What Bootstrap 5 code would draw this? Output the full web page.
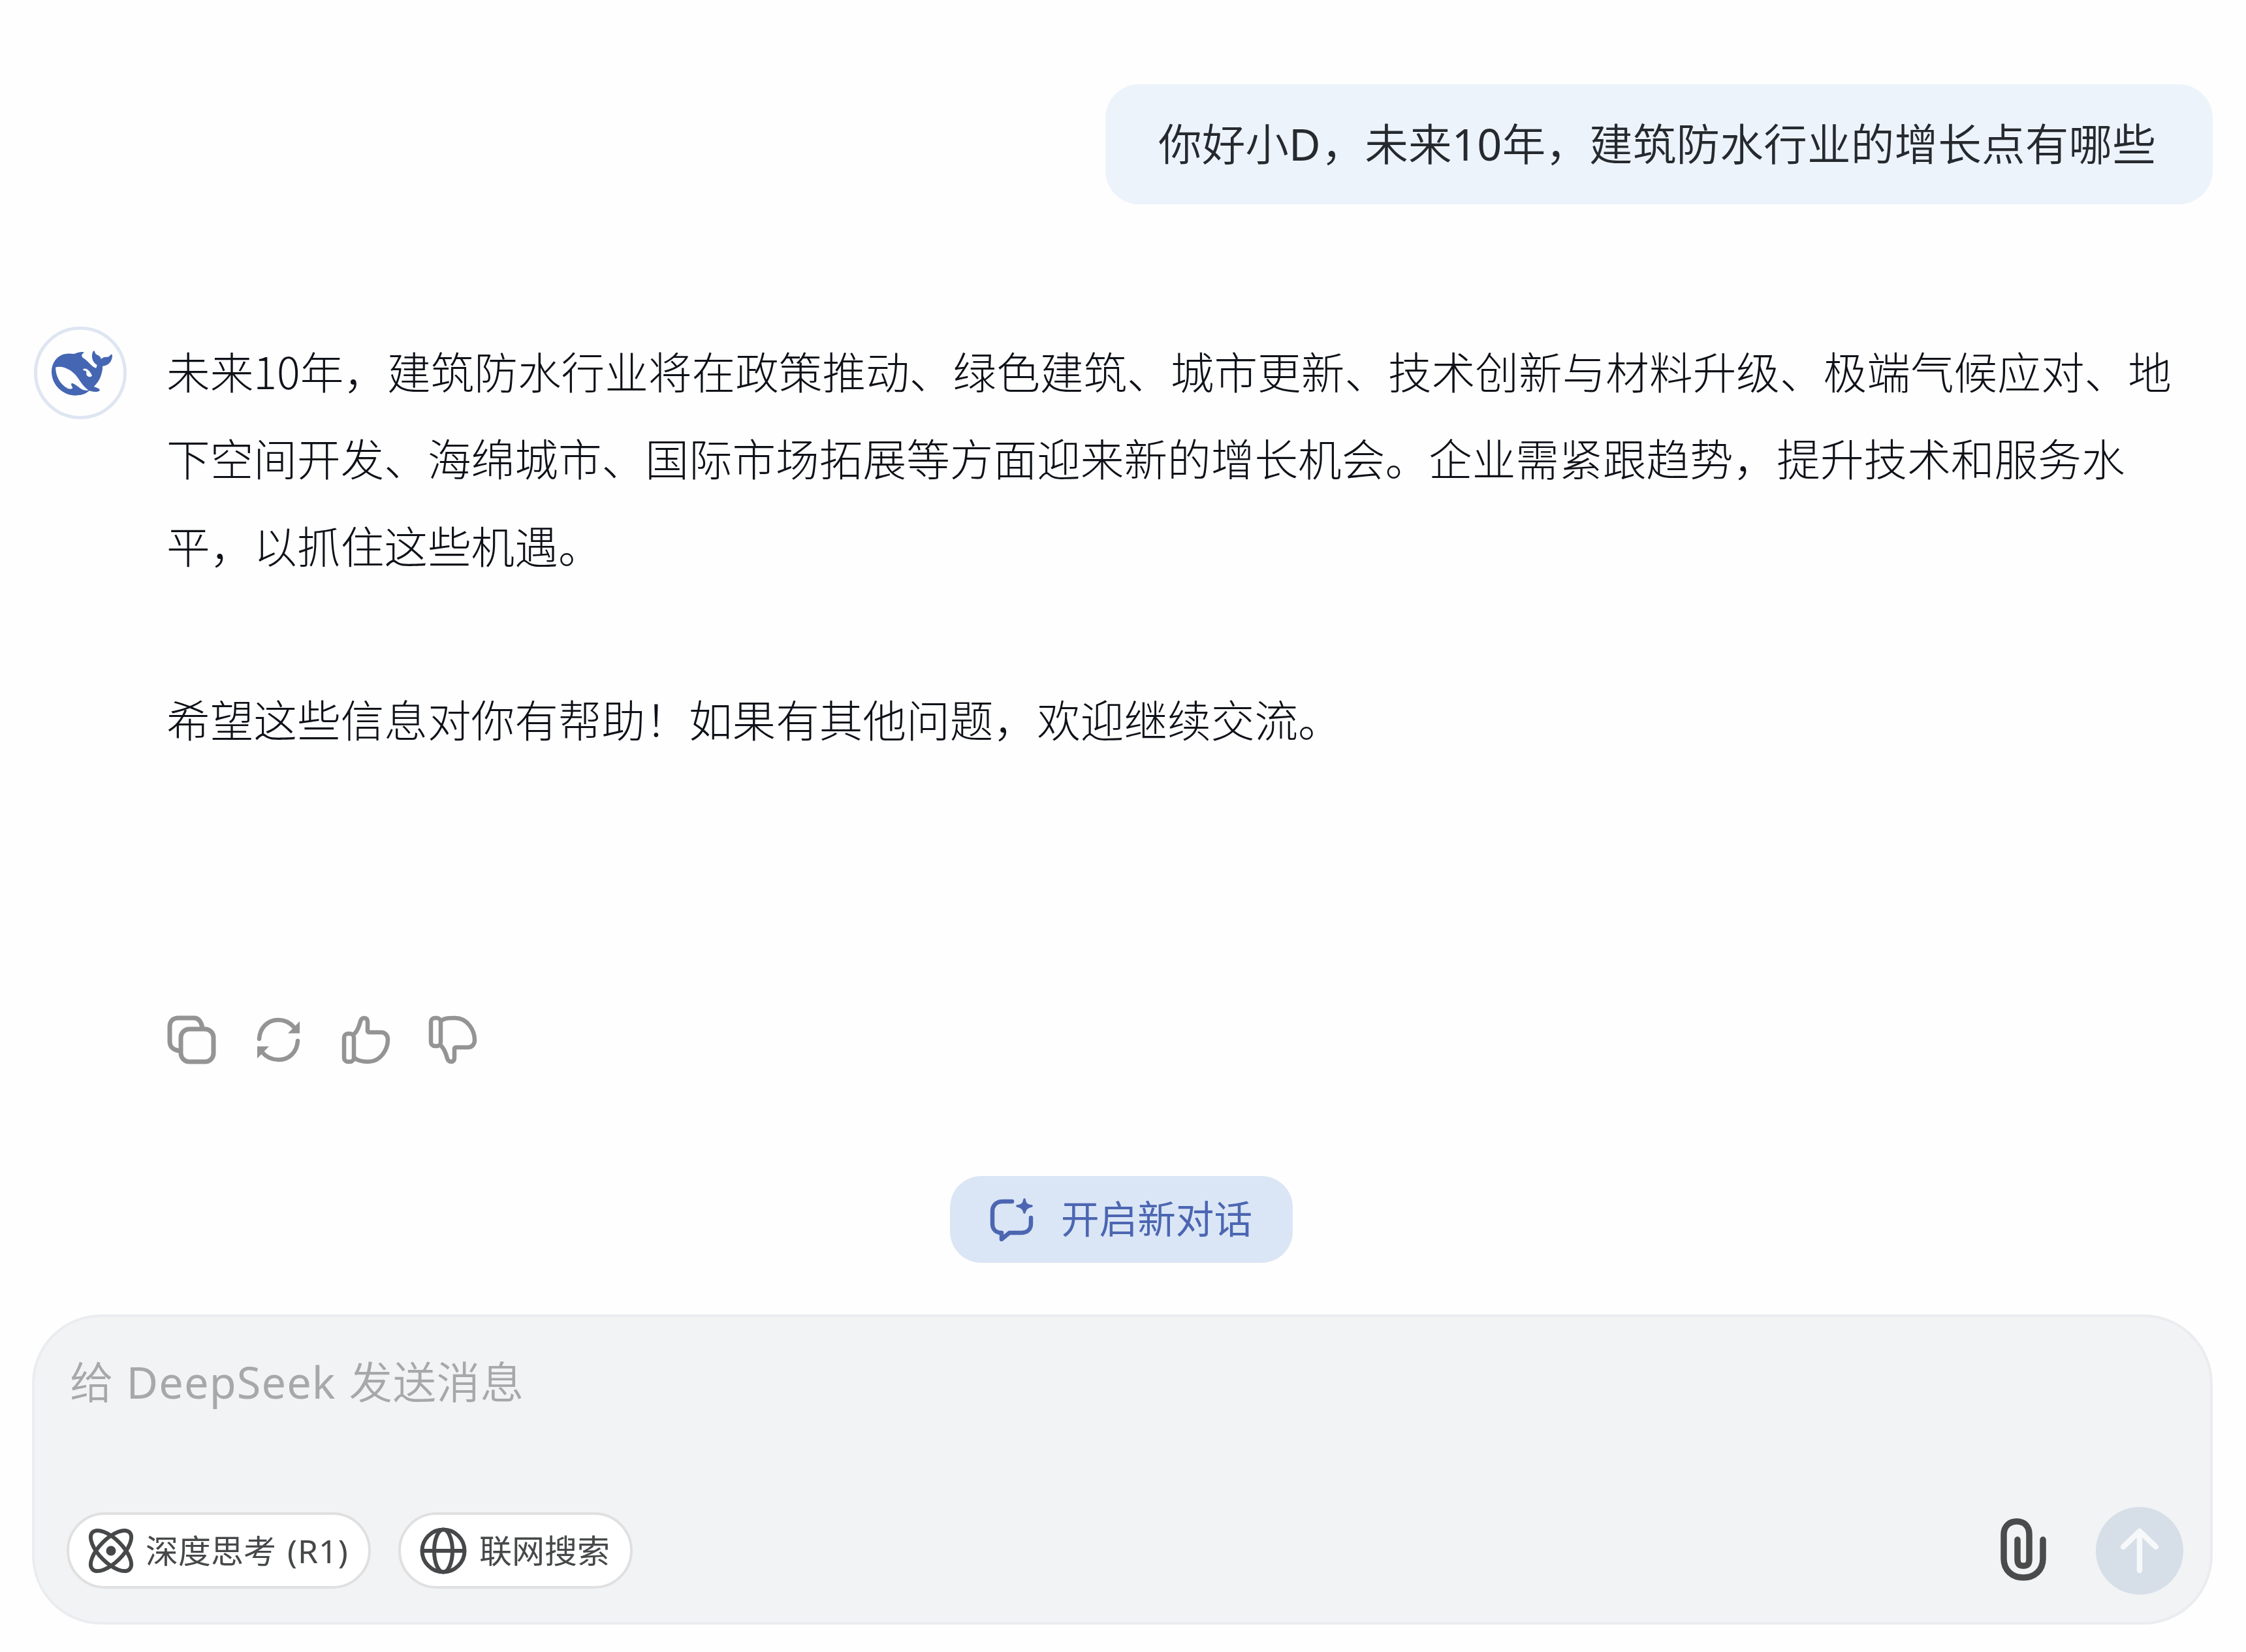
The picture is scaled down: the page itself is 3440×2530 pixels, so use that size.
<!DOCTYPE html>
<html lang="zh-CN">
<head>
<meta charset="utf-8">
<meta name="viewport" content="width=device-width, initial-scale=1">
<title>DeepSeek</title>
<link href="https://cdn.jsdelivr.net/npm/bootstrap@5.3.0/dist/css/bootstrap.min.css" rel="stylesheet">
<style>
  body { background: #fefefe; font-family: "Noto Sans", "Noto Sans CJK SC", sans-serif; }
  .chat-page { width: 3440px; height: 2530px; padding: 129px 51px 42px 49px; overflow: hidden; }
  svg { display: block; flex: none; }
  .stroke-icon { fill: none; stroke: currentColor; stroke-linecap: round; stroke-linejoin: round; }
  .bubble { width: 1696px; height: 184px; padding: 0 0 0 81px; border-radius: 52px; background: #edf3fb; color: #262a2e; font-size: 66.67px; font-weight: 350; line-height: 1; white-space: nowrap; }
  .latin-d { font-weight: 400; letter-spacing: 1px; }
  .latin-num { font-weight: 400; letter-spacing: .4px; }
  .bubble-tail { letter-spacing: .12px; }
  .reply { margin-top: 187px; gap: 61px; padding-left: 3px; }
  .avatar { width: 142px; height: 142px; border: 5px solid #dfe6f2; color: #4566b2; padding-left: 4px; flex: none; }
  .reply-text { margin-top: 1px; font-family: "Noto Sans CJK SC", sans-serif; font-weight: 300; font-size: 66.67px; line-height: 133.33px; color: #0e1118; white-space: nowrap; }
  .reply-text p { margin: 0 0 133.33px; }
  .actions { height: 75px; margin: 254px 0 0 207px; gap: 58.4px; color: #949494; }
  .new-chat { width: 525px; height: 133px; margin-top: 171px; border-radius: 48px; background: #dae6f5; color: #4c66b2; font-size: 58.6px; line-height: 1; gap: 42px; padding: 0; border: 0; }
  .new-chat span { position: relative; top: -1px; }
  .composer { height: 475px; margin-top: 79px; border: 4px solid #ebecef; border-radius: 106px; background: #f1f3f5; padding: 0 41px 42px 49px; }
  .prompt-hint { margin-top: 50px; padding-left: 5px; font-size: 66.67px; font-weight: 350; line-height: 100px; color: #a8a8a8; white-space: nowrap; word-spacing: 2.5px; }
  .latin-brand { font-weight: 400; letter-spacing: 1.1px; }
  .cjk-hint { letter-spacing: .4px; }
  .tool-row { gap: 42px; }
  .tool-pill { height: 117px; border: 4px solid #e0e0e0; border-radius: 59px; background: #fff; color: #464849; font-size: 50px; line-height: 1; white-space: nowrap; padding: 0; }
  .pill-think { width: 466px; gap: 18px; padding-left: 29px; word-spacing: 4px; }
  .latin-tag { letter-spacing: 1px; }
  .pill-web { width: 359px; gap: 19px; padding-left: 29px; }
  .send-row { gap: 75px; }
  .clip-icon { color: #4b4b4b; margin-bottom: 4px; }
  .send-btn { width: 134px; height: 134px; background: #d6dee8; color: #f6f8fa; border: 0; }
</style>
</head>
<body>
<main class="chat-page d-flex flex-column">
  <div class="bubble d-flex align-items-center align-self-end"><span>你好小<span class="latin-d">D</span>，未来<span class="latin-num">10</span>年，<span class="bubble-tail">建筑防水行业的增长点有哪些</span></span></div>

  <section class="reply d-flex align-items-start">
    <div class="avatar rounded-circle d-flex align-items-center justify-content-center">
      <svg width="93" height="69" viewBox="0 3 24 17.7" fill="currentColor"><path d="M23.748 4.482c-.254-.124-.364.113-.512.234-.051.039-.094.09-.137.136-.372.397-.806.657-1.373.626-.829-.046-1.537.214-2.163.848-.133-.782-.575-1.248-1.247-1.548-.352-.156-.708-.311-.955-.65-.172-.241-.219-.51-.305-.774-.055-.16-.11-.323-.293-.35-.2-.031-.278.136-.356.276-.313.572-.434 1.202-.422 1.84.027 1.436.633 2.58 1.838 3.393.137.093.172.187.129.323-.082.28-.18.552-.266.833-.055.179-.137.217-.329.14a5.526 5.526 0 01-1.736-1.18c-.857-.828-1.631-1.742-2.597-2.458a11.365 11.365 0 00-.689-.471c-.985-.957.13-1.743.388-1.836.27-.098.093-.432-.779-.428-.872.004-1.67.295-2.687.684a3.055 3.055 0 01-.465.137 9.597 9.597 0 00-2.883-.102c-1.885.21-3.39 1.102-4.497 2.623C.082 8.606-.231 10.684.152 12.85c.403 2.284 1.569 4.175 3.36 5.653 1.858 1.533 3.997 2.284 6.438 2.14 1.482-.085 3.133-.284 4.994-1.86.47.234.962.327 1.78.397.63.059 1.236-.03 1.705-.128.735-.156.684-.837.419-.961-2.155-1.004-1.682-.595-2.113-.926 1.096-1.296 2.746-2.642 3.392-7.003.05-.347.007-.565 0-.845-.004-.17.035-.237.23-.256a4.173 4.173 0 001.545-.475c1.396-.763 1.96-2.015 2.093-3.517.02-.23-.004-.467-.247-.588zM11.581 18c-2.089-1.642-3.102-2.183-3.52-2.16-.392.024-.321.471-.235.763.09.288.207.486.371.739.114.167.192.416-.113.603-.673.416-1.842-.14-1.897-.167-1.361-.802-2.5-1.86-3.301-3.307-.774-1.393-1.224-2.887-1.298-4.482-.02-.386.093-.522.477-.592a4.696 4.696 0 011.529-.039c2.132.312 3.946 1.265 5.468 2.774.868.86 1.525 1.887 2.202 2.891.72 1.066 1.494 2.082 2.48 2.914.348.292.625.514.891.677-.802.09-2.14.11-3.054-.614zm4.11-4.844c-.2.081-.399.151-.59.16a1.245 1.245 0 01-.798-.254c-.274-.23-.47-.358-.552-.758a1.73 1.73 0 01.016-.588c.07-.327-.008-.537-.239-.727-.187-.156-.426-.199-.688-.199a.559.559 0 01-.254-.078.253.253 0 01-.114-.358c.028-.054.16-.186.192-.21.356-.202.767-.136 1.146.016.352.144.618.408 1.001.782.391.451.462.576.685.914.176.265.336.537.445.848.067.195-.019.354-.25.452z"/></svg>
    </div>
    <div class="reply-text">
      <p>未来10年，建筑防水行业将在政策推动、绿色建筑、城市更新、技术创新与材料升级、极端气候应对、地<br>下空间开发、海绵城市、国际市场拓展等方面迎来新的增长机会。企业需紧跟趋势，提升技术和服务水<br>平，以抓住这些机遇。</p>
      <p>希望这些信息对你有帮助！如果有其他问题，欢迎继续交流。</p>
    </div>
  </section>

  <div class="actions d-flex">
    <!-- copy -->
    <svg class="stroke-icon" width="75" height="75" viewBox="0 0 75 75" stroke-width="7"><rect x="21" y="21" width="50" height="50" rx="13"/><path d="M54 19C52 9 48 4 41 4H17C9 4 4 9 4 17v23c0 8 4 12 13 14"/></svg>
    <!-- regenerate -->
    <svg class="stroke-icon" width="75" height="75" viewBox="0 0 75 75" stroke-width="6.500"><path d="M8 36C9 19 21 7 37 7c10 0 18 4 24 11"/><path d="M67 39C66 56 54 68 38 68c-10 0-19-4-25-11"/><path d="M70 9v18.500H52zM5 66V47.500h18z" fill="currentColor" stroke="none"/></svg>
    <!-- like -->
    <svg class="stroke-icon" width="75" height="75" viewBox="0 0 75 75" stroke-width="6.500"><rect x="4" y="28" width="15" height="43" rx="6"/><path d="M20 28c5-5 7-11 9-19 1-3 3-5 6-5s5 2 5 6v14c0 1 1 2 3 2h18c6 0 10 5 10 11 0 15-11 34-30 34-9 0-16-1-21-6"/></svg>
    <!-- dislike -->
    <svg class="stroke-icon" width="75" height="75" viewBox="0 0 75 75" stroke-width="6.500"><rect x="4" y="4" width="15" height="43" rx="6"/><path d="M20 47c5 5 7 11 9 19 1 3 3 5 6 5s5-2 5-6V51c0-1 1-2 3-2h18c6 0 10-5 10-11C71 23 60 4 41 4c-9 0-16 0-21 4"/></svg>
  </div>

  <button type="button" class="new-chat btn align-self-center d-flex align-items-center justify-content-center me-1">
    <svg class="stroke-icon" width="67" height="67" viewBox="0 0 67 67" stroke-width="6.500"><path d="M34 6H20C10 6 4 12 4 21v19c0 8 5 14 14 14v10l12-10h18c9 0 15-5 15-14V31"/><path d="M53 3c1 7 4 9 11 10-7 1-10 4-11 10-1-6-4-9-11-10 7-1 10-3 11-10z" fill="currentColor" stroke-width="3.500"/></svg>
    <span>开启新对话</span>
  </button>

  <section class="composer d-flex flex-column justify-content-between">
    <div class="prompt-hint">给 <span class="latin-brand">DeepSeek</span> <span class="cjk-hint">发送消息</span></div>
    <div class="d-flex align-items-center justify-content-between">
      <div class="d-flex tool-row">
        <button type="button" class="tool-pill pill-think btn d-flex align-items-center">
          <svg class="stroke-icon" width="70" height="70" viewBox="0 0 70 70" stroke-width="6"><ellipse cx="35" cy="35" rx="40" ry="18" transform="rotate(45 35 35)"/><ellipse cx="35" cy="35" rx="40" ry="18" transform="rotate(-45 35 35)"/><circle cx="35" cy="35" r="7.500" fill="currentColor" stroke="none"/></svg>
          <span>深度思考 <span class="latin-tag">(R1)</span></span>
        </button>
        <button type="button" class="tool-pill pill-web btn d-flex align-items-center">
          <svg class="stroke-icon" width="72" height="72" viewBox="0 0 72 72" stroke-width="6"><circle cx="36" cy="36" r="32.500"/><ellipse cx="36" cy="36" rx="14" ry="32.500"/><path d="M4 36h64"/></svg>
          <span>联网搜索</span>
        </button>
      </div>
      <div class="d-flex align-items-center send-row">
        <svg class="stroke-icon clip-icon" width="72" height="96" viewBox="0 0 72 96" stroke-width="9.500"><path d="M66 33v29c0 18-13 29-30 29S6 80 6 62V25C6 12 15 5 26 5s19 7 19 20v38c0 7-3 10-9 10s-9-3-9-10V33"/></svg>
        <button type="button" class="send-btn btn rounded-circle d-flex align-items-center justify-content-center p-0">
          <svg class="stroke-icon" width="60" height="70" viewBox="0 0 60 70" stroke-width="8.500"><path d="M30 6v59M5 29L30 5l25 24"/></svg>
        </button>
      </div>
    </div>
  </section>
</main>
<script src="https://cdn.jsdelivr.net/npm/bootstrap@5.3.0/dist/js/bootstrap.bundle.min.js"></script>
</body>
</html>
